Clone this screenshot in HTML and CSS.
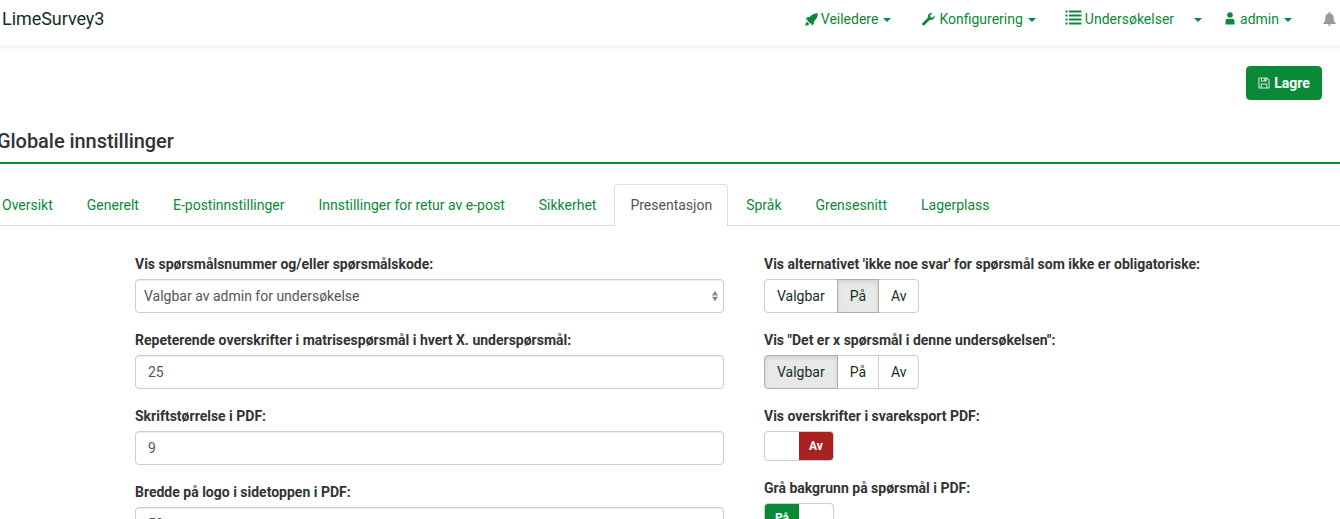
FILE: index.html
```html
<!DOCTYPE html>
<html lang="no">
<head>
<meta charset="utf-8">
<title>Globale innstillinger</title>
<link rel="stylesheet" href="styles.css">
</head>
<body>
<nav class="navbar">
  <a class="brand">LimeSurvey3</a>
  <ul class="menu">
    <li class="m-guides"><svg class="ico" viewBox="0 0 14 14"><path d="M13.800.2C11 0 8.300 1 6.200 3.100L5 4.400 2.500 4.500.3 6.800l2.700.3L2.400 8l3.600 3.600.9-.6.3 2.700 2.300-2.200.1-2.500 1.300-1.200C13 5.700 14 3 13.800.2zM2.100 9.500C1.100 10.100.5 11.800.2 13.800c2-.3 3.700-.9 4.300-1.900z"/></svg>Veiledere<i class="caret"></i></li>
    <li class="m-config"><svg class="ico ico-wrench" viewBox="0 0 14 14"><path d="M13.700 2.600 11.300 5 9.200 4.600 8.800 2.500 11.200.2C9.800-.2 8.300.2 7.200 1.300 6.200 2.300 5.900 3.800 6.300 5.100L.6 10.800c-.6.600-.6 1.600 0 2.200.6.600 1.600.6 2.200 0L8.500 7.300c1.300.4 2.800.1 3.900-.9 1.100-1.100 1.600-2.500 1.300-3.800z"/></svg>Konfigurering<i class="caret"></i></li>
    <li class="m-surveys"><svg class="ico ico-list" viewBox="0 0 16 15"><path d="M0 .5h2v2H0zM0 4.500h2v2H0zM0 8.500h2v2H0zM0 12.500h2v2H0zM3.500.5H16v2H3.500zM3.500 4.500H16v2H3.500zM3.500 8.500H16v2H3.500zM3.500 12.500H16v2H3.500z"/></svg>Undersøkelser<i class="caret caret-far"></i></li>
    <li class="m-admin"><svg class="ico ico-user" viewBox="0 0 10 13"><circle cx="5" cy="3" r="2.800"/><path d="M.5 12.500V9.500C.5 7.500 2 6.500 3 6.500c.6.400 1.200.6 2 .6s1.400-.2 2-.6c1 0 2.500 1 2.500 3v3z"/></svg>admin<i class="caret"></i></li>
    <li class="m-bell"><svg class="ico-bell" viewBox="0 0 13 14"><path d="M6.500 0C5.900 0 5.500.4 5.500 1v.6C3.500 2 2.300 3.600 2.300 5.600 2.300 9 1.500 10 .3 11.200v.8h12.400v-.8C11.500 10 10.700 9 10.700 5.600c0-2-1.200-3.600-3.200-4V1c0-.6-.4-1-1-1zM5 12.600c0 .8.700 1.400 1.500 1.400S8 13.400 8 12.600z"/></svg></li>
  </ul>
</nav>

<div class="toolbar">
  <button class="btn-save"><svg class="ico-save" viewBox="0 0 14 14"><path fill-rule="evenodd" d="M1.500.5h9.200l2.800 2.800v9.200a1 1 0 0 1-1 1h-11a1 1 0 0 1-1-1v-11a1 1 0 0 1 1-1zM1.700 1.700v10.600h10.600V3.800L10.200 1.700H10v3.500H3.500V1.700zM4.700 1.700v2.300h2.600V1.700zM3.200 7.500h7.600v4.800H3.200zM4.400 8.700v3.600h5.200V8.700z"/></svg>Lagre</button>
</div>

<h1 class="title">Globale innstillinger</h1>

<ul class="tabs">
  <li>Oversikt</li>
  <li>Generelt</li>
  <li>E-postinnstillinger</li>
  <li>Innstillinger for retur av e-post</li>
  <li>Sikkerhet</li>
  <li class="active">Presentasjon</li>
  <li>Språk</li>
  <li>Grensesnitt</li>
  <li>Lagerplass</li>
</ul>

<main class="form">
  <section class="col">
    <div class="field">
      <label>Vis spørsmålsnummer og/eller spørsmålskode:</label>
      <div class="control select">Valgbar av admin for undersøkelse<svg class="updown" viewBox="0 0 7 12"><path d="M3.500 0 7 5.500H0zM3.500 12 0 7h7z"/></svg></div>
    </div>
    <div class="field">
      <label>Repeterende overskrifter i matrisespørsmål i hvert X. underspørsmål:</label>
      <div class="control">25</div>
    </div>
    <div class="field">
      <label>Skriftstørrelse i PDF:</label>
      <div class="control">9</div>
    </div>
    <div class="field">
      <label>Bredde på logo i sidetoppen i PDF:</label>
      <div class="control">50</div>
    </div>
  </section>
  <section class="col">
    <div class="field">
      <label>Vis alternativet 'ikke noe svar' for spørsmål som ikke er obligatoriske:</label>
      <div class="btn-group"><span>Valgbar</span><span class="on">På</span><span>Av</span></div>
    </div>
    <div class="field">
      <label>Vis "Det er x spørsmål i denne undersøkelsen":</label>
      <div class="btn-group"><span class="on">Valgbar</span><span>På</span><span>Av</span></div>
    </div>
    <div class="field">
      <label>Vis overskrifter i svareksport PDF:</label>
      <div class="switch"><span></span><span class="sw-off">Av</span></div>
    </div>
    <div class="field">
      <label>Grå bakgrunn på spørsmål i PDF:</label>
      <div class="switch"><span class="sw-on">På</span><span></span></div>
    </div>
  </section>
</main>
</body>
</html>
```
FILE: styles.css
```css
* { box-sizing: border-box; }
html, body { margin: 0; height: 519px; overflow: hidden; background: #fff; }
body { font: 14px/20px Roboto, "Liberation Sans", sans-serif; color: #333; }

.navbar {
  height: 46px;
  display: flex;
  justify-content: space-between;
  align-items: flex-start;
  padding-left: 2px;
  box-shadow: 0 1px 4px rgba(0,0,0,.1);
}
.brand { font-size: 18px; line-height: 20px; padding-top: 9px; color: #14301f; letter-spacing: -.05px; }
.menu { list-style: none; margin: 0; padding: 9px 0 0; display: flex; color: #0a8a36; }
.menu li { display: flex; align-items: center; height: 20px; white-space: nowrap; }
.m-guides { margin-right: 31px; }
.m-config { margin-right: 29px; }
.m-surveys { margin-right: 23px; }
.m-admin { margin-right: 31px; }
.m-bell { margin-right: 4px; }
.ico { width: 13px; height: 13px; fill: #0a8a36; margin-right: 3px; }
.ico-wrench { margin-right: 4px; }
.ico-list { width: 17px; height: 15px; margin-right: 3px; margin-top: -3px; }
.ico-user { width: 10px; height: 13px; margin-right: 5px; margin-top: -1px; }
.ico-bell { width: 13px; height: 14px; fill: #999; }
.caret {
  width: 0; height: 0; margin-left: 5px; margin-top: 2px;
  border-left: 4px solid transparent;
  border-right: 4px solid transparent;
  border-top: 4px solid #0a8a36;
}
.caret-far { margin-left: 20px; }

.toolbar { display: flex; justify-content: flex-end; padding: 20px 18px 0 0; }
.btn-save {
  width: 76px; height: 34px;
  display: flex; align-items: center; justify-content: center;
  background: #0a8a36; border: 1px solid #0a8a36; border-radius: 4px;
  color: #fff; font: 700 14px/20px Roboto, sans-serif; padding: 0;
}
.ico-save { width: 12px; height: 12px; fill: #cfe8d8; margin-right: 4px; }

.title {
  height: 62px;
  margin: 0 0 0 -3px;
  padding-top: 30px;
  font-size: 20px; line-height: 22px; font-weight: 500; color: #333;
  letter-spacing: -.05px;
}

.tabs {
  list-style: none;
  margin: 0; padding: 20px 0 0;
  display: flex;
  height: 64px;
  border-top: 2px solid #0a8a36;
  color: #0a8a36;
  position: relative;
}
.tabs::after {
  content: ""; position: absolute; left: 0; right: 0; bottom: 0;
  border-bottom: 1px solid #ddd;
}
.tabs li { padding: 10px 15px 11px; margin-right: 2px; height: 42px; border: 1px solid transparent; border-bottom: 0; }
.tabs li:first-child { margin-left: -14px; }
.tabs .active {
  color: #555; background: #fff;
  border-color: #ddd; border-radius: 4px 4px 0 0;
  position: relative; z-index: 1;
}

.form {
  display: grid;
  grid-template-columns: 589px 436px;
  column-gap: 40px;
  padding: 28px 0 0 135px;
}
.field { margin-bottom: 17px; }
.field label { display: block; font-weight: 700; line-height: 20px; margin-bottom: 5px; color: #333; }
.control {
  height: 34px;
  border: 1px solid #ccc; border-radius: 4px;
  padding: 6px 12px; color: #555;
  box-shadow: inset 0 1px 1px rgba(0,0,0,.075);
  background: #fff;
}
.select { display: flex; justify-content: space-between; align-items: center; padding: 6px 5px 6px 8px; }
.updown { width: 6px; height: 12px; fill: #888; }

.btn-group { display: inline-flex; height: 34px; }
.btn-group span {
  border: 1px solid #ccc; margin-left: -1px;
  padding: 6px 12px; background: #fff; color: #14301f;
}
.btn-group span:first-child { margin-left: 0; border-radius: 4px 0 0 4px; }
.btn-group span:last-child { border-radius: 0 4px 4px 0; padding-right: 11px; }
.btn-group .on { background: #e8e8e8; border-color: #adadad; box-shadow: inset 0 2px 4px rgba(0,0,0,.1); z-index: 1; }

.switch {
  display: flex; width: 70px; height: 30px;
  border: 1px solid #ccc; border-radius: 4px; overflow: hidden;
  font-size: 12px; font-weight: 700; line-height: 28px; color: #fff; text-align: center;
}
.switch span { flex: 1; }
.sw-off { background: #ab2020; }
.sw-on { background: #0a8a36; }
```
